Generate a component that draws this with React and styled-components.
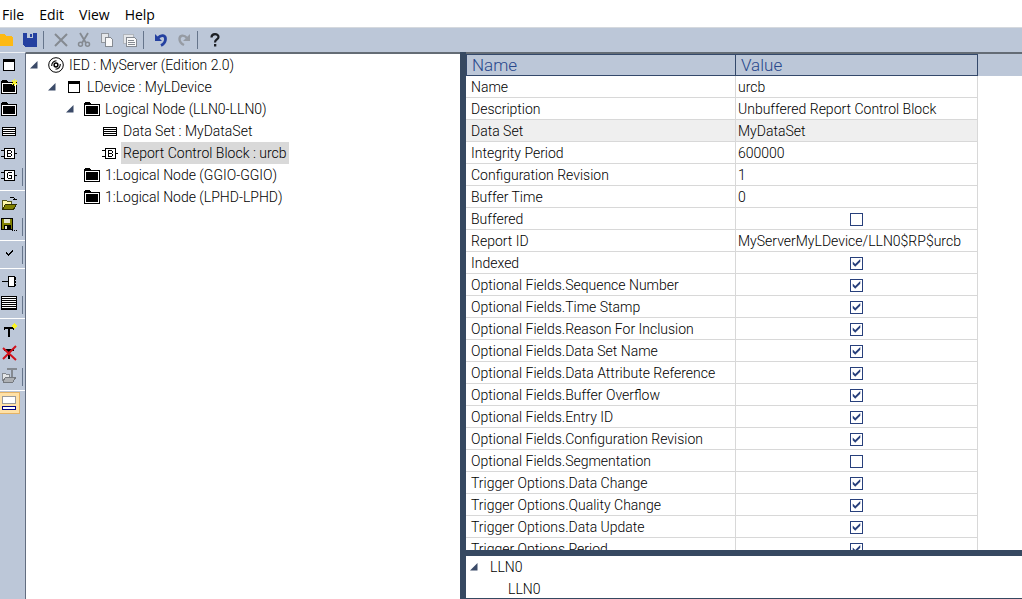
import React, { useState } from "react";
import styled, { createGlobalStyle } from "styled-components";

const GlobalStyle = createGlobalStyle`
  * {
    box-sizing: border-box;
  }

  body {
    margin: 0;
    background: #fff;
    color: #000;
    font-family: Roboto, "Liberation Sans", Arial, sans-serif;
    font-size: 14px;
    font-weight: 300;
  }

  button {
    border: none;
    background: none;
    padding: 0;
    color: inherit;
    font: inherit;
  }

  svg {
    display: block;
    flex: none;
  }
`;

const Window = styled.div`
  display: flex;
  flex-direction: column;
  height: 100vh;
  overflow: hidden;
`;

const MenuBar = styled.nav`
  display: flex;
  gap: 15px;
  height: 28px;
  padding: 2px 2px 0;
  border-bottom: 1px solid #d5d9de;
  font-family: "Open Sans", sans-serif;
  font-size: 14px;
  font-weight: 400;
`;

const ToolBar = styled.div`
  display: flex;
  align-items: center;
  height: 24px;
  background: #bcc7d8;
`;

const ToolButton = styled.button`
  display: flex;
  align-items: center;
  justify-content: ${(props) => (props.$clipped ? "flex-end" : "center")};
  width: ${(props) => (props.$clipped ? 18 : 23)}px;
  height: 22px;
  padding-right: ${(props) => (props.$clipped ? 5 : 0)}px;
  overflow: hidden;
`;

const ToolDivider = styled.span`
  width: 8px;
  height: 18px;
  display: flex;
  padding-left: 2px;

  &::before {
    content: "";
    width: 1px;
    background: #66758b;
  }
`;

const Main = styled.div`
  display: flex;
  flex: 1;
  min-height: 0;
`;

const SideBar = styled.aside`
  flex: none;
  width: 26px;
  padding-top: 1px;
  background: #bcc7d8;
  border-top: 1px solid #eef1f5;
  border-right: 1px solid #626d80;
`;

const SideGroup = styled.div`
  display: flex;
  flex-direction: column;
  position: relative;
  margin-bottom: 1px;
  padding-bottom: 4px;
  border-bottom: 1px solid ${(props) => (props.$last ? "transparent" : "#fff")};

  &::after {
    content: "";
    display: ${(props) => (props.$last ? "none" : "block")};
    position: absolute;
    right: 2px;
    bottom: 4px;
    width: 1px;
    height: 18px;
    background: #66758b;
  }
`;

const SideButton = styled.button`
  display: flex;
  align-items: center;
  justify-content: flex-start;
  width: 20px;
  height: 22px;
  padding-left: 1px;
  background: ${(props) => (props.$active ? "#ffe1a6" : "none")};
  box-shadow: ${(props) => (props.$active ? "inset -1px 0 #e5b365, inset 0 1px #e5b365, inset 0 -1px #e5b365" : "none")};
`;

const Pane = styled.section`
  flex: ${(props) => props.$grow} 1 0;
  min-width: 0;
  display: flex;
  flex-direction: column;
  border-top: 2px solid #646c75;
`;

const Splitter = styled.div`
  flex: none;
  background: #364961;
  ${(props) => (props.$horizontal ? "height: 6px;" : "width: 6px;")}
`;

const Tree = styled.ul`
  margin: 0;
  padding: 0;
  list-style: none;
`;

const TreeRow = styled.li`
  display: flex;
  align-items: center;
  height: 22px;
  padding-left: ${(props) => 4 + props.$level * 18}px;
`;

const Toggle = styled.button`
  width: 18px;
  height: 18px;
  display: flex;
  align-items: center;
`;

const ToggleSpace = styled.span`
  width: 18px;
`;

const NodeIcon = styled.span`
  width: 16px;
  margin-right: 3px;
`;

const NodeLabel = styled.span`
  padding: 0 2px;
  line-height: 22px;
  white-space: nowrap;
  background: ${(props) => (props.$selected ? "#d9d9d9" : "none")};
`;

const GridPane = styled.div`
  flex: 1;
  min-height: 0;
  overflow: hidden;
  background: linear-gradient(#bcc7d8 22px, #fff 22px);
`;

const Grid = styled.table`
  width: 512px;
  border-collapse: separate;
  border-spacing: 0;
  table-layout: fixed;
`;

const HeadCell = styled.th`
  width: ${(props) => props.$width}px;
  height: 22px;
  padding: 0 5px;
  background: #bcc7d8;
  border: solid #34496b;
  border-width: 1px 1px 1px 0;
  color: #28478c;
  font-size: 17px;
  font-weight: 300;
  line-height: 20px;
  text-align: left;

  &:first-child {
    border-left-width: 1px;
  }
`;

const GridRow = styled.tr`
  background: ${(props) => (props.$shaded ? "#efefef" : "#fff")};
`;

const Cell = styled.td`
  height: 22px;
  padding: 1px 2px 0;
  border-right: 1px solid #d8d8d8;
  border-bottom: 1px solid #d8d8d8;
  line-height: 20px;
  white-space: nowrap;
  text-align: ${(props) => (props.$center ? "center" : "left")};

  &:first-child {
    padding-left: 5px;
  }
`;

const CheckBox = styled.input`
  appearance: none;
  display: block;
  width: 13px;
  height: 13px;
  margin: 0 auto;
  border: 1px solid #28407c;
  background: #fff;

  &:checked::after {
    content: "";
    display: block;
    width: 9px;
    height: 9px;
    margin: 1px;
    background: #28407c;
    clip-path: polygon(8% 34%, 36% 60%, 92% 6%, 92% 36%, 36% 92%, 8% 64%);
  }
`;

const BottomPane = styled.div`
  flex: none;
  border-bottom: 1px solid #364961;
  height: 43px;
  overflow: hidden;
`;

const Glyph = ({ size = 16, children }) => (
  <svg width={size} height={size} viewBox="0 0 16 16" fill="none" shapeRendering="crispEdges" aria-hidden="true">
    {children}
  </svg>
);

const Smooth = ({ children }) => <g shapeRendering="geometricPrecision">{children}</g>;

const icons = {
  open: (
    <Glyph>
      <path d="M1 2h6l2 2h6l1 2v8H1z" fill="#fdb913" />
    </Glyph>
  ),
  save: (
    <Glyph>
      <path d="M1 1h14v14H3l-2-2z" fill="#2440a0" />
      <path d="M5 1h6v5H5z" fill="#bcc7d8" />
      <path d="M8 2h2v3H8z" fill="#2440a0" />
    </Glyph>
  ),
  remove: (
    <Glyph>
      <Smooth>
        <path d="M2 2l12 12M14 2L2 14" stroke="#858a91" strokeWidth="2" />
      </Smooth>
    </Glyph>
  ),
  cut: (
    <Glyph>
      <Smooth>
        <path d="M4 1l6 10M12 1L6 11" stroke="#858a91" strokeWidth="1.800" />
        <circle cx="4.500" cy="12.300" r="2" stroke="#858a91" strokeWidth="1.500" />
        <circle cx="11.500" cy="12.300" r="2" stroke="#858a91" strokeWidth="1.500" />
      </Smooth>
    </Glyph>
  ),
  copy: (
    <Glyph>
      <path d="M2.500 1.500h7v9h-7z" fill="#e5e7ea" stroke="#91969d" />
      <path d="M6.500 5.500h5l2 2v7h-7z" fill="#fafafa" stroke="#858a91" />
    </Glyph>
  ),
  paste: (
    <Glyph>
      <path d="M1.500 2.500h10v9h-10z" fill="#e5e7ea" stroke="#b0b5bc" />
      <path d="M4.500 5.500h8l2 2v7h-10z" fill="#fafafa" stroke="#858a91" />
      <path d="M6 8.500h6M6 10.500h7M6 12.500h7" stroke="#858a91" />
    </Glyph>
  ),
  undo: (
    <Glyph>
      <Smooth>
        <path d="M5 6C8 2.500 12.500 3 12.500 7c0 3-1.500 5-4.500 6.500" stroke="#2440a0" strokeWidth="2.800" />
        <path d="M2 2v7h7z" fill="#2440a0" />
      </Smooth>
    </Glyph>
  ),
  redo: (
    <Glyph>
      <Smooth>
        <path d="M11 6C8 2.500 3.500 3 3.500 7c0 3 1.500 4.500 4.500 6" stroke="#969ba3" strokeWidth="2.400" />
        <path d="M14 2v7H7z" fill="#969ba3" />
      </Smooth>
    </Glyph>
  ),
  help: (
    <Glyph>
      <Smooth>
        <path d="M4.500 5.500C4.500 1 11.500 1 11.500 5c0 2.500-3.500 2.500-3.500 5.500" stroke="#1c1f24" strokeWidth="2.200" />
        <path d="M7 12h2.300v2.500H7z" fill="#1c1f24" />
      </Smooth>
    </Glyph>
  ),
  device: (
    <Glyph>
      <path d="M2.500 2.500h11v11h-11z" fill="#fff" stroke="#000" />
      <path d="M2 2h12v3H2z" fill="#000" />
    </Glyph>
  ),
  folder: (
    <Glyph>
      <path d="M0 2l1-1h5l1 2h9v12H0z" fill="#000" />
      <path d="M1.500 4.500h13v9h-13z" stroke="#fff" />
    </Glyph>
  ),
  newFolder: (
    <Glyph>
      <path d="M0 2l1-1h5l1 2h9v12H0z" fill="#000" />
      <path d="M1.500 4.500h13v9h-13z" stroke="#fff" />
      <path d="M13 0h1v2h1v-1h1v2h-1v1h1v2h-1v-1h-1v2h-1V5h-1v1h-1V4h1V3h-1V1h1v1h1z" fill="#f7f22c" />
    </Glyph>
  ),
  dataSet: (
    <Glyph>
      <path d="M1.500 4.500h13v8h-13z" fill="#fff" stroke="#000" />
      <path d="M2 6.500h12M2 8.500h12M2 10.500h12" stroke="#000" />
    </Glyph>
  ),
  report: (
    <Glyph>
      <path d="M0 5.500h3M0 11.500h3M14 8.500h2" stroke="#000" />
      <path d="M3.500 3.500h10v10h-10z" fill="#fff" stroke="#000" />
      <path d="M6.500 5v7M7 5.500h3M7 8.500h3M7 11.500h3M10.500 6v2M10.500 9v2" stroke="#000" />
    </Glyph>
  ),
  goose: (
    <Glyph>
      <path d="M0 5.500h3M0 11.500h3M14 8.500h2" stroke="#000" />
      <path d="M3.500 3.500h10v10h-10z" fill="#fff" stroke="#000" />
      <path d="M7 5.500h4M6.500 6v5M7 11.500h4M10.500 11V8.500H8" stroke="#000" />
    </Glyph>
  ),
  openFile: (
    <Glyph>
      <path d="M1.500 13.500v-8h4l1 1h4v3" fill="#fff8a8" stroke="#55551a" />
      <path d="M1.500 14.500l3-5h11l-3 5z" fill="#808000" stroke="#2f2f00" />
      <path d="M9 2.500h4M13.500 3v2M12 4.500h4" stroke="#000" />
    </Glyph>
  ),
  saveAs: (
    <Glyph>
      <path d="M.5 1.500h11v11H.5z" fill="#808000" stroke="#000" />
      <path d="M3 2h6v4H3z" fill="#e4e6d0" />
      <path d="M3 8h7v4H3z" fill="#000" />
      <path d="M4 9h2v3H4z" fill="#e4e6d0" />
      <path d="M11 13h1v1h-1zM13 13h1v1h-1zM15 13h1v1h-1z" fill="#000" />
    </Glyph>
  ),
  check: (
    <Glyph>
      <path d="M5 7v2h1v1h1v1h1v-1h1V9h1V8h1V7h1V5h-1v1h-1v1H9v1H8v1H7V8H6V7z" fill="#000" />
    </Glyph>
  ),
  input: (
    <Glyph>
      <path d="M1 8.500h6" stroke="#000" />
      <path d="M7.500 3.500h6v10h-6z" fill="#fff" stroke="#000" />
      <path d="M14.500 4v3M14.500 8v2M14.500 11v2" stroke="#000" />
    </Glyph>
  ),
  list: (
    <Glyph>
      <path d="M.5 1.500h15v13H.5z" fill="#fff" stroke="#000" />
      <path d="M1 3.500h14M1 5.500h14M1 7.500h14M1 9.500h14M1 11.500h14M1 13.500h14" stroke="#000" />
    </Glyph>
  ),
  newType: (
    <Glyph>
      <path d="M3 4h10v3h-1V6H9v8H7V6H4v1H3z" fill="#000" />
      <path d="M13 0h1v1h1v1h1v2h-1v1h-1v1h-1V5h-1V4h-1V2h1V1h1z" fill="#f7f22c" />
    </Glyph>
  ),
  deleteType: (
    <Glyph>
      <path d="M3 4h10v2h-4v8H7V6H3z" fill="#000" />
      <Smooth>
        <path d="M2 3l13 12M15 1L2 14" stroke="#d1121b" strokeWidth="2" />
      </Smooth>
    </Glyph>
  ),
  exportType: (
    <Glyph>
      <path d="M1.500 13.500v-7h3l1 1h3v3" fill="#e4e6e8" stroke="#858a91" />
      <path d="M6 1h10v2h-4v8h-2V3H6z" fill="#858a91" />
      <path d="M2 14l3-4h10l-3 5H2z" fill="#aeb1b5" stroke="#75797f" />
    </Glyph>
  ),
  layout: (
    <Glyph>
      <path d="M1.500 1.500h13v7h-13z" fill="#fff" stroke="#9b9b9b" />
      <path d="M1.500 11.500h13v3h-13z" fill="#fff" stroke="#000080" />
    </Glyph>
  ),
  ied: (
    <Glyph>
      <Smooth>
        <circle cx="8" cy="8" r="7.300" fill="#fff" stroke="#000" />
        <circle cx="8" cy="8" r="1.900" stroke="#000" strokeWidth="1.500" />
        <path d="M3.700 9C3.700 6 5.500 4 8.500 3.700M12.300 7c0 3-1.800 5-4.800 5.300" stroke="#000" strokeWidth="1.100" />
      </Smooth>
    </Glyph>
  ),
};

const toolItems = [
  ["open", "Open"],
  ["save", "Save"],
  null,
  ["remove", "Delete"],
  ["cut", "Cut"],
  ["copy", "Copy"],
  ["paste", "Paste"],
  null,
  ["undo", "Undo"],
  ["redo", "Redo"],
  null,
  ["help", "Help"],
];

const sideGroups = [
  ["device", "newFolder", "folder", "dataSet", "report", "goose"],
  ["openFile", "saveAs"],
  ["check"],
  ["input", "list"],
  ["newType", "deleteType", "exportType"],
  ["layout"],
];

const nodes = [
  { label: "IED : MyServer (Edition 2.0)", icon: "ied", level: 0, open: true },
  { label: "LDevice : MyLDevice", icon: "device", level: 1, open: true },
  { label: "Logical Node (LLN0-LLN0)", icon: "folder", level: 2, open: true },
  { label: "Data Set : MyDataSet", icon: "dataSet", level: 3 },
  { label: "Report Control Block : urcb", icon: "report", level: 3 },
  { label: "1:Logical Node (GGIO-GGIO)", icon: "folder", level: 2 },
  { label: "1:Logical Node (LPHD-LPHD)", icon: "folder", level: 2 },
];

const typeNodes = [
  { label: "LLN0", level: 0, open: true },
  { label: "LLN0", level: 1 },
];

const initialProperties = [
  { name: "Name", value: "urcb" },
  { name: "Description", value: "Unbuffered Report Control Block" },
  { name: "Data Set", value: "MyDataSet", shaded: true },
  { name: "Integrity Period", value: "600000" },
  { name: "Configuration Revision", value: "1" },
  { name: "Buffer Time", value: "0" },
  { name: "Buffered", value: false },
  { name: "Report ID", value: "MyServerMyLDevice/LLN0$RP$urcb" },
  { name: "Indexed", value: true },
  { name: "Optional Fields.Sequence Number", value: true },
  { name: "Optional Fields.Time Stamp", value: true },
  { name: "Optional Fields.Reason For Inclusion", value: true },
  { name: "Optional Fields.Data Set Name", value: true },
  { name: "Optional Fields.Data Attribute Reference", value: true },
  { name: "Optional Fields.Buffer Overflow", value: true },
  { name: "Optional Fields.Entry ID", value: true },
  { name: "Optional Fields.Configuration Revision", value: true },
  { name: "Optional Fields.Segmentation", value: false },
  { name: "Trigger Options.Data Change", value: true },
  { name: "Trigger Options.Quality Change", value: true },
  { name: "Trigger Options.Data Update", value: true },
  { name: "Trigger Options.Period", value: true },
];

function TreeView({ items, selected, onSelect }) {
  return (
    <Tree>
      {items.map((node, index) => (
        <TreeRow key={index} $level={node.level}>
          {node.open ? (
            <Toggle aria-label="Collapse">
              <svg width="8" height="8" viewBox="0 0 8 8" aria-hidden="true">
                <path d="M7.500 0v7.500H0z" fill="#3b4a68" />
              </svg>
            </Toggle>
          ) : (
            <ToggleSpace />
          )}
          {node.icon && <NodeIcon>{icons[node.icon]}</NodeIcon>}
          <NodeLabel
            $selected={selected === index}
            onClick={() => onSelect && onSelect(index)}
          >
            {node.label}
          </NodeLabel>
        </TreeRow>
      ))}
    </Tree>
  );
}

function App() {
  const [selected, setSelected] = useState(4);
  const [properties, setProperties] = useState(initialProperties);

  const toggleProperty = (name) => {
    setProperties(
      properties.map((item) =>
        item.name === name ? { ...item, value: !item.value } : item
      )
    );
  };

  return (
    <Window>
      <GlobalStyle />
      <MenuBar>
        {["File", "Edit", "View", "Help"].map((item) => (
          <button key={item}>{item}</button>
        ))}
      </MenuBar>
      <ToolBar>
        {toolItems.map((item, index) =>
          item ? (
            <ToolButton key={index} $clipped={index === 0} aria-label={item[1]}>
              {icons[item[0]]}
            </ToolButton>
          ) : (
            <ToolDivider key={index} />
          )
        )}
      </ToolBar>
      <Main>
        <SideBar>
          {sideGroups.map((group, index) => (
            <SideGroup key={index} $last={index === sideGroups.length - 1}>
              {group.map((name) => (
                <SideButton key={name} $active={name === "layout"} aria-label={name}>
                  {icons[name]}
                </SideButton>
              ))}
            </SideGroup>
          ))}
        </SideBar>
        <Pane $grow={434}>
          <TreeView items={nodes} selected={selected} onSelect={setSelected} />
        </Pane>
        <Splitter />
        <Pane $grow={556}>
          <GridPane>
            <Grid>
              <thead>
                <tr>
                  <HeadCell $width={270}>Name</HeadCell>
                  <HeadCell $width={242}>Value</HeadCell>
                </tr>
              </thead>
              <tbody>
                {properties.map((item) => {
                  const isFlag = typeof item.value === "boolean";

                  return (
                    <GridRow key={item.name} $shaded={item.shaded}>
                      <Cell>
                        {isFlag ? <label htmlFor={item.name}>{item.name}</label> : item.name}
                      </Cell>
                      <Cell $center={isFlag}>
                        {isFlag ? (
                          <CheckBox
                            type="checkbox"
                            id={item.name}
                            checked={item.value}
                            onChange={() => toggleProperty(item.name)}
                          />
                        ) : (
                          item.value
                        )}
                      </Cell>
                    </GridRow>
                  );
                })}
              </tbody>
            </Grid>
          </GridPane>
          <Splitter $horizontal />
          <BottomPane>
            <TreeView items={typeNodes} />
          </BottomPane>
        </Pane>
      </Main>
    </Window>
  );
}

export default App;
